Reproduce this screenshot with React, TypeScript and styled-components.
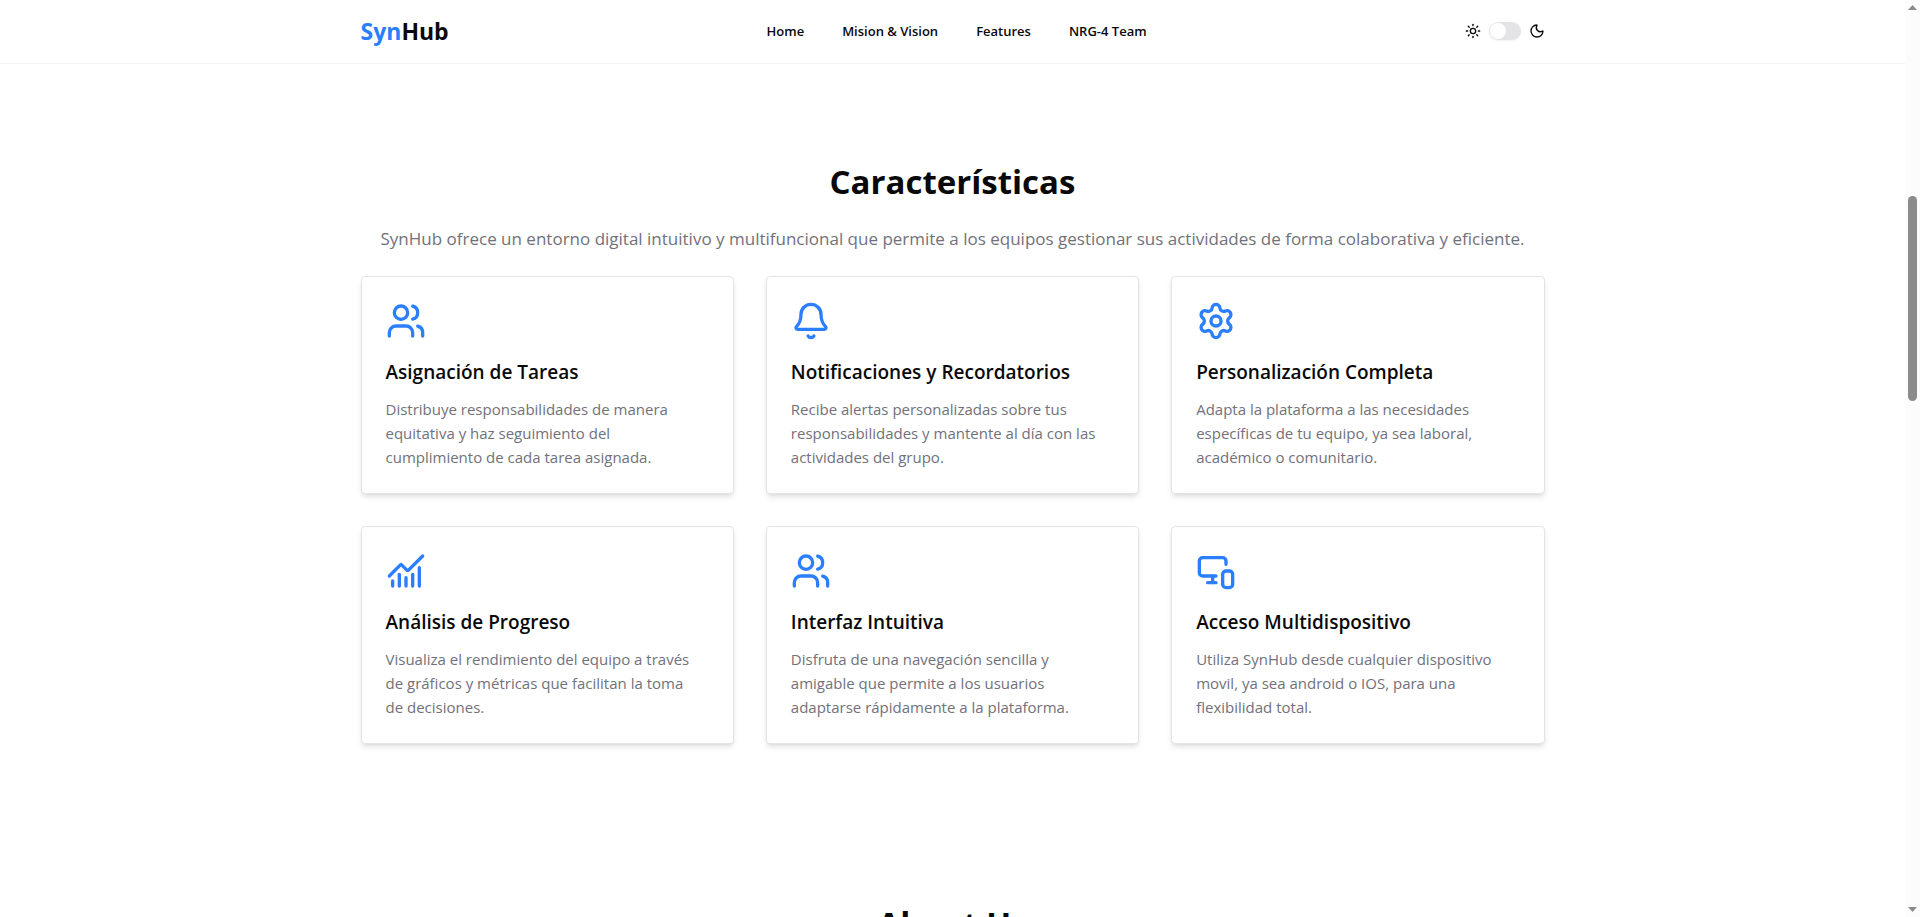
import React, { useState } from "react";
import styled, { createGlobalStyle } from "styled-components";
import {
  Bell,
  ChartNoAxesCombined,
  MonitorSmartphone,
  Moon,
  Settings,
  Sun,
  Users,
  type LucideIcon,
} from "lucide-react";

const GlobalStyle = createGlobalStyle`
  *, *::before, *::after { box-sizing: border-box; }
  html, body { height: 100%; }
  body {
    margin: 0;
    overflow: hidden;
    background: #fff;
    color: #09090b;
    font-family: "Segoe UI", "Open Sans", "Noto Sans", sans-serif;
    font-size: 15px;
    line-height: 24px;
  }
  h1, h2, h3, p { margin: 0; }
`;

const Viewport = styled.div`
  display: grid;
  grid-template-columns: minmax(0, 1fr) 15px;
  height: 100vh;
  overflow: hidden;
`;

const Page = styled.div`
  display: flex;
  flex-direction: column;
  min-width: 0;
  overflow: hidden;
`;

const Header = styled.header`
  flex: none;
  border-bottom: 1px solid #f4f4f5;
`;

const Container = styled.div`
  width: 100%;
  max-width: 1280px;
  margin: 0 auto;
  padding: 0 48px;
`;

const HeaderBar = styled(Container)`
  display: flex;
  align-items: center;
  justify-content: space-between;
  height: 63px;
  padding-bottom: 1px;
`;

const Logo = styled.a`
  color: inherit;
  font-size: 23px;
  font-weight: 700;
  line-height: 32px;
  text-decoration: none;
`;

const LogoAccent = styled.span`
  color: #2b7fff;
`;

const Nav = styled.nav`
  display: flex;
  gap: 38px;
`;

const NavLink = styled.a`
  color: inherit;
  font-size: 13px;
  font-weight: 600;
  line-height: 20px;
  text-decoration: none;
`;

const ThemeToggle = styled.label`
  display: flex;
  align-items: center;
  gap: 8px;
  cursor: pointer;
`;

const Switch = styled.input`
  appearance: none;
  display: flex;
  align-items: center;
  width: 32px;
  height: 18px;
  margin: 0;
  padding: 1px;
  border-radius: 9px;
  background: #e4e4e7;
  box-shadow: 0 1px 2px rgba(0, 0, 0, 0.05);
  cursor: pointer;

  &::before {
    content: "";
    width: 16px;
    height: 16px;
    border-radius: 50%;
    background: #fff;
  }

  &:checked {
    justify-content: flex-end;
    background: #2b7fff;
  }
`;

const Section = styled.section`
  flex: none;
  padding: 98px 0 62px;
`;

const SectionTitle = styled.h2`
  margin-bottom: 23px;
  font-size: 33px;
  font-weight: 700;
  line-height: 40px;
  text-align: center;
`;

const Lead = styled.p`
  margin-bottom: 23px;
  color: #71717b;
  font-size: 17px;
  line-height: 28px;
  text-align: center;
`;

const CardGrid = styled.div`
  display: grid;
  grid-template-columns: repeat(auto-fit, minmax(300px, 1fr));
  gap: 32px;
`;

const Card = styled.article`
  padding: 24px;
  border: 1px solid #e4e4e7;
  border-radius: 4px;
  background: #fff;
  box-shadow: 0 4px 6px -1px rgba(0, 0, 0, 0.1), 0 2px 4px -2px rgba(0, 0, 0, 0.1);
`;

const CardIcon = styled.div`
  display: flex;
  margin-bottom: 17px;
  color: #2b7fff;
`;

const CardTitle = styled.h3`
  margin-bottom: 11px;
  font-size: 19px;
  font-weight: 600;
  line-height: 28px;
`;

const CardText = styled.p`
  padding-right: 8px;
  color: #71717b;
`;

const ScrollTrack = styled.div`
  display: grid;
  grid-template-rows: 15px 181fr 205px 501fr 15px;
  justify-items: center;
  background: #fcfcfc;
`;

const ScrollThumb = styled.div`
  grid-row: 3;
  width: 9px;
  border-radius: 5px;
  background: #8b8b8b;
`;

const ScrollArrow = styled.svg<{ $end?: boolean }>`
  grid-row: ${({ $end }) => ($end ? 5 : 1)};
  align-self: center;
  width: 9px;
  height: 5px;
  fill: #8b8b8b;
`;

const links = [
  { label: "Home", href: "#home" },
  { label: "Mision & Vision", href: "#mision" },
  { label: "Features", href: "#features" },
  { label: "NRG-4 Team", href: "#team" },
];

const features: { icon: LucideIcon; title: string; text: string }[] = [
  {
    icon: Users,
    title: "Asignación de Tareas",
    text: "Distribuye responsabilidades de manera equitativa y haz seguimiento del cumplimiento de cada tarea asignada.",
  },
  {
    icon: Bell,
    title: "Notificaciones y Recordatorios",
    text: "Recibe alertas personalizadas sobre tus responsabilidades y mantente al día con las actividades del grupo.",
  },
  {
    icon: Settings,
    title: "Personalización Completa",
    text: "Adapta la plataforma a las necesidades específicas de tu equipo, ya sea laboral, académico o comunitario.",
  },
  {
    icon: ChartNoAxesCombined,
    title: "Análisis de Progreso",
    text: "Visualiza el rendimiento del equipo a través de gráficos y métricas que facilitan la toma de decisiones.",
  },
  {
    icon: Users,
    title: "Interfaz Intuitiva",
    text: "Disfruta de una navegación sencilla y amigable que permite a los usuarios adaptarse rápidamente a la plataforma.",
  },
  {
    icon: MonitorSmartphone,
    title: "Acceso Multidispositivo",
    text: "Utiliza SynHub desde cualquier dispositivo movil, ya sea android o IOS, para una flexibilidad total.",
  },
];

export default function App() {
  const [dark, setDark] = useState(false);

  return (
    <>
      <GlobalStyle />
      <Viewport>
        <Page>
          <Header>
            <HeaderBar>
              <Logo href="#home">
                <LogoAccent>Syn</LogoAccent>Hub
              </Logo>
              <Nav>
                {links.map((link) => (
                  <NavLink key={link.href} href={link.href}>
                    {link.label}
                  </NavLink>
                ))}
              </Nav>
              <ThemeToggle>
                <Sun size={16} />
                <Switch
                  type="checkbox"
                  role="switch"
                  aria-label="Modo oscuro"
                  checked={dark}
                  onChange={(event) => setDark(event.target.checked)}
                />
                <Moon size={16} />
              </ThemeToggle>
            </HeaderBar>
          </Header>

          <Section id="features">
            <Container>
              <SectionTitle>Características</SectionTitle>
              <Lead>
                SynHub ofrece un entorno digital intuitivo y multifuncional que permite a los
                equipos gestionar sus actividades de forma colaborativa y eficiente.
              </Lead>
              <CardGrid>
                {features.map(({ icon: Icon, title, text }) => (
                  <Card key={title}>
                    <CardIcon>
                      <Icon size={40} />
                    </CardIcon>
                    <CardTitle>{title}</CardTitle>
                    <CardText>{text}</CardText>
                  </Card>
                ))}
              </CardGrid>
            </Container>
          </Section>

          <Section id="about">
            <Container>
              <SectionTitle>About Us</SectionTitle>
            </Container>
          </Section>
        </Page>

        <ScrollTrack aria-hidden="true">
          <ScrollArrow viewBox="0 0 9 5">
            <path d="M4.5 0 9 5H0z" />
          </ScrollArrow>
          <ScrollThumb />
          <ScrollArrow $end viewBox="0 0 9 5">
            <path d="M4.5 5 0 0h9z" />
          </ScrollArrow>
        </ScrollTrack>
      </Viewport>
    </>
  );
}
